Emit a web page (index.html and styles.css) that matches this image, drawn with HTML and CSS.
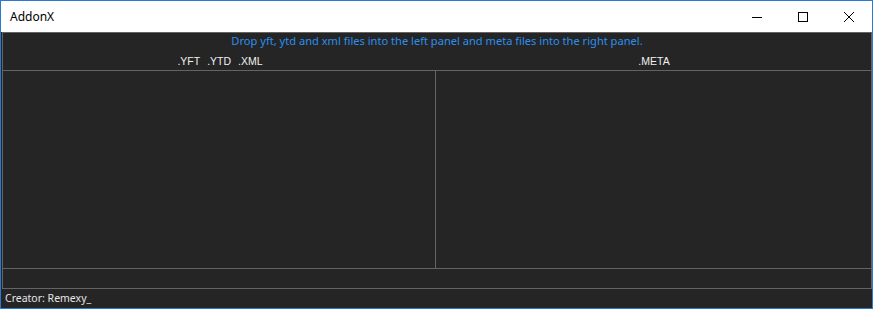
FILE: index.html
```html
<!DOCTYPE html>
<html lang="en">
<head>
    <meta charset="UTF-8">
    <title>AddonX</title>
    <link rel="stylesheet" href="styles.css">
</head>
<body>
    <div class="window">
        <div class="titlebar">
            <span class="title">AddonX</span>
            <div class="controls">
                <div class="ctrl">
                    <svg width="10" height="10" viewBox="0 0 10 10"><path d="M0 5.5h10" stroke="#000" stroke-width="1"/></svg>
                </div>
                <div class="ctrl">
                    <svg width="10" height="10" viewBox="0 0 10 10"><rect x="0.5" y="0.5" width="9" height="9" fill="none" stroke="#000" stroke-width="1"/></svg>
                </div>
                <div class="ctrl">
                    <svg width="10" height="10" viewBox="0 0 10 10"><path d="M0 0L10 10M10 0L0 10" stroke="#000" stroke-width="1"/></svg>
                </div>
            </div>
        </div>
        <div class="client">
            <div class="frame">
                <div class="hint">Drop yft, ytd and xml files into the left panel and meta files into the right panel.</div>
                <div class="headers">
                    <div class="head"><span>.YFT</span><span>.YTD</span><span>.XML</span></div>
                    <div class="head"><span>.META</span></div>
                </div>
                <div class="panels">
                    <div class="panel left-panel"></div>
                    <div class="panel"></div>
                </div>
                <div class="status"></div>
            </div>
            <div class="footer">Creator: Remexy_</div>
        </div>
    </div>
</body>
</html>
```

FILE: styles.css
```css
body {
    margin: 0;
    background: #1c5c8c;
    font-family: "Noto Sans", "Open Sans", sans-serif;
}
.window {
    width: 873px;
    height: 309px;
    box-sizing: border-box;
    border: 1px solid #2a7ad4;
    display: flex;
    flex-direction: column;
}
.titlebar {
    height: 31px;
    background: #fff;
    display: flex;
    align-items: center;
    justify-content: space-between;
}
.title {
    padding-left: 9px;
    font-size: 12px;
    color: #000;
}
.controls {
    display: flex;
    height: 31px;
}
.ctrl {
    width: 46px;
    display: flex;
    align-items: center;
    justify-content: center;
}
.client {
    flex: 1;
    background: #252525;
    display: flex;
    flex-direction: column;
}
.frame {
    margin-left: 1px;
    border: 1px solid #646464;
    display: flex;
    flex-direction: column;
}
.hint {
    height: 18px;
    line-height: 16px;
    text-align: center;
    color: #2b8ff0;
    font-size: 11.1px;
}
.headers {
    height: 19px;
    display: flex;
    border-bottom: 1px solid #646464;
    font-family: "Liberation Sans", Arial, sans-serif;
    font-size: 10.5px;
    color: #f0f0f0;
}
.head {
    flex: 1;
    display: flex;
    justify-content: center;
    align-items: center;
    gap: 7px;
}
.panels {
    height: 197px;
    display: flex;
    border-bottom: 1px solid #646464;
}
.panel {
    flex: 1;
}
.left-panel {
    flex: 0 0 432px;
    border-right: 1px solid #646464;
}
.status {
    height: 19px;
}
.footer {
    height: 19px;
    line-height: 19px;
    padding-left: 4px;
    font-size: 10.5px;
    color: #e6e6e6;
}
```
